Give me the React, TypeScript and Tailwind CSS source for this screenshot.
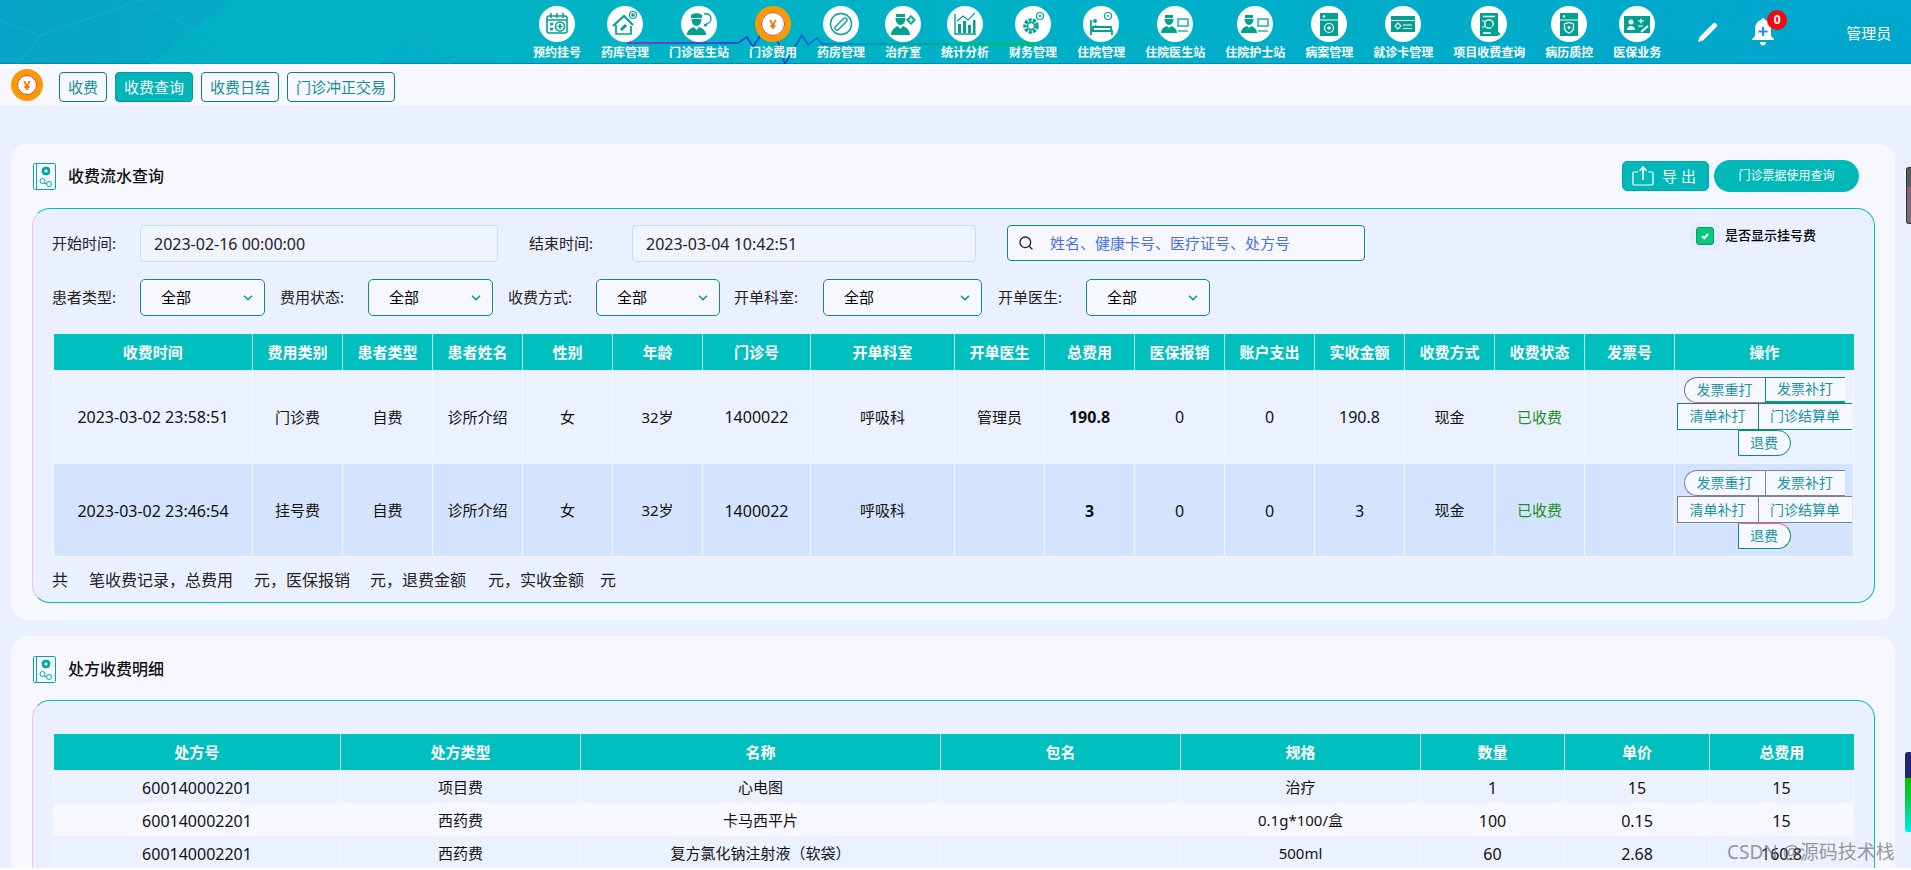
import { ChevronDown, Search } from "lucide-react";
import type { ReactNode } from "react";

const T = "#00a093";

const icons: Record<string, ReactNode> = {
  calendar: <g fill="none" stroke={T} strokeWidth="1.6"><rect x="8" y="10" width="20" height="17" rx="2" /><path d="M8 14h20M12 7v5M18 7v5M24 7v5" /><circle cx="21" cy="20.5" r="4.5" /><path d="M21 18v5M18.5 20.5h5" /><path d="M11 18h3M11 23h3" strokeWidth="2.4" /></g>,
  house: <g fill="none" stroke={T} strokeWidth="1.7"><path d="M6 20 17 10l9 9" strokeWidth="2.2" /><path d="M9 19v9h15v-8" /><path d="m14 24 5-5" strokeWidth="3" /><circle cx="26" cy="9" r="3.5" strokeWidth="1.2" /><circle cx="26" cy="9" r="1" fill={T} /></g>,
  doctor: <g fill={T}><path d="M10 9c3-2.5 8-2.5 11 0v3H10z" /><path d="M10.5 13h10c0 4-2 7-5 7s-5-3-5-7z" /><path d="M6 29c0-5 4-7 7-8l2.5 3 2.5-3c3 1 7 3 7 8z" /><path d="M23 8c4-1 7 1 7 5 0 3-3 5-5 5" fill="none" stroke={T} strokeWidth="1.3" /><circle cx="24.5" cy="19" r="1.6" /></g>,
  pill: <g fill="none" stroke={T}><circle cx="18" cy="18" r="10.5" strokeWidth="1.4" /><path d="m14 22 8-8" strokeWidth="5.4" strokeLinecap="round" /><path d="m14 22 8-8" stroke="#fff" strokeWidth="2.8" strokeLinecap="round" /></g>,
  nurse: <g fill={T}><path d="M11 8h9v3h-9z" /><path d="M10.5 12h10c0 4-2 7-5 7s-5-3-5-7z" /><path d="M6 29c0-5 4-8 7-9l2.5 3 2.5-3c3 1 7 4 7 9z" /><path d="m26 9 5 5-5 5-5-5z" /><path d="M26 11.5v5M23.5 14h5" stroke="#fff" strokeWidth="1.2" /></g>,
  chart: <g fill={T}><path d="M8 8v20h21" fill="none" stroke={T} strokeWidth="1.4" /><rect x="11" y="18" width="3" height="9" /><rect x="16" y="15" width="3" height="12" /><rect x="21" y="19" width="3" height="8" /><rect x="26" y="14" width="2.5" height="13" /><path d="m10 15 6-5 5 4 7-7" fill="none" stroke={T} strokeWidth="1.3" /></g>,
  gear: <g fill="none" stroke={T}><circle cx="16" cy="20" r="6" strokeWidth="3.5" strokeDasharray="3 1.2" /><circle cx="16" cy="20" r="3.5" strokeWidth="1.5" /><circle cx="25" cy="10" r="3.5" strokeWidth="1.2" /><circle cx="25" cy="10" r="1" fill={T} /></g>,
  bed: <g fill={T}><path d="M8 14v15M8 25h21v4M10 21h18v4H10z" fill="none" stroke={T} strokeWidth="1.8" /><circle cx="12" cy="15" r="2" /><path d="m12 19 6 2h-6z" /><circle cx="25" cy="10" r="3.5" fill="none" stroke={T} strokeWidth="1.2" /><circle cx="25" cy="10" r="1" /></g>,
  docScreen: <g fill={T}><path d="M8 9h8v3H8z" /><path d="M7.5 13h9c0 3-2 6-4.5 6s-4.5-3-4.5-6z" /><path d="M4 27c0-4 3-6 6-7l2 2 2-2c3 1 6 3 6 7z" /><rect x="21" y="13" width="10" height="7" fill="none" stroke={T} strokeWidth="1.3" /><path d="M21 25h10" stroke={T} strokeWidth="1.2" /></g>,
  record: <g><rect x="9" y="7" width="18" height="23" fill={T} /><path d="M9 14h18" stroke="#fff" strokeWidth="1" /><circle cx="13" cy="10.5" r="1.2" fill="#fff" /><circle cx="18" cy="22" r="4.5" fill="none" stroke="#fff" strokeWidth="1.2" /><circle cx="18" cy="22" r="1.8" fill="#fff" /></g>,
  card: <g><rect x="6" y="10" width="24" height="16" fill={T} /><path d="M6 14.5h24M18 19h9M18 22.5h9" stroke="#fff" strokeWidth="1.2" /><path d="m13 17 3 3-3 3-3-3z" fill="none" stroke="#fff" strokeWidth="1.1" /></g>,
  search: <g><rect x="9" y="7" width="18" height="23" fill={T} /><path d="M12 10.5h12M12 27h8" stroke="#fff" strokeWidth="1.4" /><circle cx="18" cy="18" r="4.2" fill={T} stroke="#fff" strokeWidth="1.3" /><path d="m21 21 8 8" stroke={T} strokeWidth="2.2" /><path d="M11 15h3M11 21h3" stroke="#fff" strokeWidth="1.1" /></g>,
  shield: <g><rect x="9" y="7" width="18" height="23" fill={T} /><path d="M9 14h18" stroke="#fff" strokeWidth="1" /><circle cx="13" cy="10.5" r="1.2" fill="#fff" /><path d="M18 16.5l4.5 1.5v4c0 2.5-2 4-4.5 5-2.5-1-4.5-2.5-4.5-5v-4z" fill="none" stroke="#fff" strokeWidth="1.2" /><circle cx="18" cy="21.5" r="1.5" fill="#fff" /></g>,
  ins: <g><rect x="5" y="10" width="26" height="17" fill={T} /><circle cx="12" cy="16" r="2.5" fill="#fff" /><path d="M8 24c0-3 2-4 4-4s4 1 4 4z" fill="#fff" /><path d="M19 15h6M22 12.5v5M19 20h5" stroke="#fff" strokeWidth="1.1" /><path d="m22 26 7-6" stroke="#fff" strokeWidth="1.8" /></g>,
};

const navItems: [string, string][] = [
  ["预约挂号", "calendar"], ["药库管理", "house"], ["门诊医生站", "doctor"], ["门诊费用", "yuan"],
  ["药房管理", "pill"], ["治疗室", "nurse"], ["统计分析", "chart"], ["财务管理", "gear"],
  ["住院管理", "bed"], ["住院医生站", "docScreen"], ["住院护士站", "docScreen"], ["病案管理", "record"],
  ["就诊卡管理", "card"], ["项目收费查询", "search"], ["病历质控", "shield"], ["医保业务", "ins"],
];

function YuanBadge({ className }: { className: string }) {
  return <div className={"flex shrink-0 items-center justify-center rounded-full border-[6px] border-[#f99a05] bg-white " + className}>
    <div className="flex h-full w-full items-center justify-center rounded-full border border-[#e8331b] text-[13px] font-bold leading-none text-[#f07a00]">¥</div>
  </div>;
}

function NavItem({ label, icon }: { label: string; icon: string }) {
  return <div className="flex flex-col items-center">
    {icon === "yuan"
      ? <YuanBadge className="h-9 w-9" />
      : <div className="h-9 w-9 rounded-full bg-white"><svg viewBox="0 0 36 36" className="h-9 w-9">{icons[icon]}</svg></div>}
    <span className="mt-[5px] whitespace-nowrap text-[12px] font-bold leading-[12px] text-white">{label}</span>
  </div>;
}

function HeaderDecor() {
  return <svg className="pointer-events-none absolute inset-0 h-[64px] w-[1911px]" viewBox="0 0 1911 64">
    <defs>
      <linearGradient id="ecg" gradientUnits="userSpaceOnUse" x1="627" y1="0" x2="1035" y2="0">
        <stop offset="0" stopColor="#8a22c8" />
        <stop offset="0.35" stopColor="#1c36d6" />
        <stop offset="0.55" stopColor="#0a80c8" />
        <stop offset="1" stopColor="#00d400" />
      </linearGradient>
    </defs>
    <path d="M0 20 40 36 18 64M40 36 140 0M140 0l90 48-80 16M230 48 330 0M330 0l120 64" fill="none" stroke="#1fb4cf" strokeWidth="1" opacity="0.6" />
    <path d="M230 0h210l-60 64H150z" fill="#00b7c4" opacity="0.55" />
    <path d="M1600 0h311v64h-311z" fill="#00a4cc" opacity="0.4" />
    <path d="M627 43H738L747 37L753 47L760 36L778 42L785 64L802 35L808 45L817 38L822 44H1035" fill="none" stroke="url(#ecg)" strokeWidth="1.5" />
  </svg>;
}

function Header() {
  return <header className="relative flex h-[66px] items-start border-b-2 border-white bg-[linear-gradient(90deg,#08a3c6_0%,#04aec8_18%,#00b4c4_32%,#00afc8_60%,#00a8cc_100%)] shadow-[inset_0_-1px_0_#0686b4]">
    <HeaderDecor />
    <nav className="relative ml-[533px] mt-[6px] flex gap-5">
      {navItems.map(([label, icon]) => <NavItem key={label} label={label} icon={icon} />)}
    </nav>
    <svg viewBox="0 0 22 22" className="relative ml-[36px] mt-[21px] h-[22px] w-[22px]">
      <path d="M1 21l1.5-5L16 2.500a2 2 0 0 1 3 0l.5.5a2 2 0 0 1 0 3L6 19.5z" fill="#fff" />
    </svg>
    <div className="relative ml-[31px] mt-[17px] h-[30px] w-[26px]">
      <svg viewBox="0 0 26 30" className="h-[30px] w-[26px]">
        <path d="M13 1c1.5 0 2 1 2 2 4 1 6 5 6 9v7l3 3v1H2v-1l3-3v-7c0-4 2-8 6-9 0-1 .5-2 2-2z" fill="#fff" />
        <path d="M10 25h6c0 2-1 3.5-3 3.5S10 27 10 25z" fill="#fff" />
        <path d="M13 10v9M8.5 14.5h9" stroke="#1e8fe8" strokeWidth="2" />
      </svg>
      <span className="absolute left-[17px] top-[-7px] flex h-5 w-5 items-center justify-center rounded-full bg-[#ef0b10] text-[12px] font-bold leading-none text-white">0</span>
    </div>
    <span className="relative ml-[70px] mt-[23px] whitespace-nowrap text-[15px] leading-5 text-white">管理员</span>
  </header>;
}

const subTabs = ["收费", "收费查询", "收费日结", "门诊冲正交易"];

function SubNav() {
  return <div className="flex h-[39px] items-start bg-[#f7f8ff] pl-[11px]">
    <YuanBadge className="mt-[3px] h-8 w-8 border-[5px]" />
    <div className="ml-4 mt-[6px] flex gap-2">
      {subTabs.map((t) => <button key={t} className={t === "收费查询"
        ? "h-[30px] rounded-[4px] border border-[#0d948c] bg-[#00b6b8] px-[8px] text-[15px] text-white"
        : "h-[30px] rounded-[4px] border border-[#0b7f78] bg-[#f7f8ff] px-[8px] text-[15px] text-[#148f96]"}>{t}</button>)}
    </div>
  </div>;
}

function BookIcon() {
  return <svg viewBox="0 0 23 27" className="h-[27px] w-[23px] shrink-0" fill="none" stroke="#00a6a6">
    <rect x="0.5" y="0.5" width="22" height="26" rx="1" />
    <path d="M3.5 1v25" />
    <circle cx="13" cy="8" r="4" fill="#00a6a6" />
    <path d="M13 6v4M11 8h4" stroke="#fff" />
    <circle cx="9.5" cy="18" r="2.5" />
    <circle cx="16" cy="21" r="2.5" />
    <path d="M11 20l3 1" />
  </svg>;
}

function SectionTitle({ children }: { children: ReactNode }) {
  return <div className="flex items-center gap-3">
    <BookIcon />
    <h2 className="text-[16px] font-medium leading-6 text-[#111]">{children}</h2>
  </div>;
}

function Picker({ label, labelW, value, w, ml }: { label: string; labelW: string; value: string; w: string; ml: string }) {
  return <div className={"flex items-center " + ml}>
    <span className={"text-[15px] text-[#222] -ml-px whitespace-nowrap " + labelW}>{label}</span>
    <div className={"flex h-[37px] items-center justify-between rounded-[5px] border border-[#0d8b7f] bg-[#f7f8ff] pl-[20px] pr-[9px] " + w}>
      <span className="text-[15px] text-black">{value}</span>
      <ChevronDown size={14} strokeWidth={3} className="text-[#0d9a94]" />
    </div>
  </div>;
}

function Filters() {
  return <div>
    <div className="flex items-start">
      <span className="-ml-px w-[88px] text-[15px] leading-[37px] text-[#222]">开始时间:</span>
      <input readOnly value="2023-02-16 00:00:00" className="h-[37px] w-[358px] rounded-[4px] border border-[#c2def8] bg-[#f0f4fe] pl-[13px] text-[16px] text-[#222] outline-none" />
      <span className="ml-[31px] w-[103px] text-[15px] leading-[37px] text-[#222]">结束时间:</span>
      <input readOnly value="2023-03-04 10:42:51" className="h-[37px] w-[344px] rounded-[4px] border border-[#c2def8] bg-[#f0f4fe] pl-[13px] text-[16px] text-[#222] outline-none" />
      <div className="ml-[31px] flex h-[36px] w-[358px] items-center rounded-[4px] border border-[#0d8b7f] bg-[#f7f8ff] pl-[10px]">
        <Search size={16} className="shrink-0 text-[#222]" />
        <input placeholder="姓名、健康卡号、医疗证号、处方号" className="ml-[16px] w-full bg-transparent text-[15px] outline-none placeholder:text-[#4a72e0]" />
      </div>
      <div className="ml-[325px] mt-[-3px] flex h-[28px] w-[30px] shrink-0 items-center justify-center rounded-[8px] bg-[#e3ebfb]">
        <span className="flex h-[18px] w-[18px] items-center justify-center rounded-[3px] border border-[#0a9a6a] bg-[#06c77e]">
          <svg viewBox="0 0 12 12" className="h-3 w-3" fill="none" stroke="#fff" strokeWidth="2"><path d="m3 6 2.2 2.2L9 4" /></svg>
        </span>
      </div>
      <span className="ml-[5px] mt-[-1px] whitespace-nowrap text-[13px] font-medium leading-[22px] text-black">是否显示挂号费</span>
    </div>
    <div className="mt-[17px] flex items-center">
      <Picker label="患者类型:" labelW="w-[88px]" value="全部" w="w-[125px]" ml="" />
      <Picker label="费用状态:" labelW="w-[88px]" value="全部" w="w-[125px]" ml="ml-[16px]" />
      <Picker label="收费方式:" labelW="w-[88px]" value="全部" w="w-[124px]" ml="ml-[16px]" />
      <Picker label="开单科室:" labelW="w-[89px]" value="全部" w="w-[159px]" ml="ml-[15px]" />
      <Picker label="开单医生:" labelW="w-[88px]" value="全部" w="w-[124px]" ml="ml-[17px]" />
    </div>
  </div>;
}

const feeCols: [string, string][] = [
  ["收费时间", "w-[199px]"], ["费用类别", "w-[90px]"], ["患者类型", "w-[90px]"], ["患者姓名", "w-[90px]"], ["性别", "w-[90px]"],
  ["年龄", "w-[90px]"], ["门诊号", "w-[108px]"], ["开单科室", "w-[144px]"], ["开单医生", "w-[90px]"], ["总费用", "w-[90px]"],
  ["医保报销", "w-[90px]"], ["账户支出", "w-[90px]"], ["实收金额", "w-[90px]"], ["收费方式", "w-[90px]"], ["收费状态", "w-[90px]"],
  ["发票号", "w-[90px]"], ["操作", "w-[179px]"],
];

const feeRows = [
  { time: "2023-03-02 23:58:51", type: "门诊费", doctor: "管理员", total: "190.8", paid: "190.8", bg: "bg-[#ebf1fe]", first: "border-[#667085] border-b-[#e85f9c]", second: "border-[#0b8a78] border-b-[#079a86] border-b-2", third: "border-[#0b8a78]", last: "border-[#0b8a78] border-t-[#0b8a78]" },
  { time: "2023-03-02 23:46:54", type: "挂号费", doctor: "", total: "3", paid: "3", bg: "bg-[#d4e4fe]", first: "border-[#7c8598]", second: "border-[#7c8598]", third: "border-[#7c8598]", last: "border-[#0b8a78] border-t-[#e85f9c]" },
];

function Actions({ row }: { row: (typeof feeRows)[number] }) {
  const base = "h-[26px] border-y border-l bg-[#f7f8ff] text-[14px] leading-none text-[#1b93a0]";
  return <div className="flex flex-col items-center">
    <div className="flex">
      <button className={base + " w-[81px] rounded-l-full " + row.first}>发票重打</button>
      <button className={base + " w-[80px] " + row.second}>发票补打</button>
    </div>
    <div className="flex">
      <button className={base + " h-[27px] w-[81px] " + row.third}>清单补打</button>
      <button className={base + " h-[27px] w-[94px] " + row.third}>门诊结算单</button>
    </div>
    <button className={"h-[26px] w-[53px] rounded-r-full border bg-[#f7f8ff] text-[14px] leading-none text-[#1b93a0] " + row.last}>退费</button>
  </div>;
}

const cell = "border-x border-[#f4f7ff] p-0 pt-[2px]";
const numCell = "border-x border-[#f4f7ff] p-0 pt-[2px] text-[16px]";

function FeeTable() {
  return <table className="mt-[18px] w-[1800px] table-fixed border-collapse text-center text-[15px] text-[#111]">
    <colgroup>{feeCols.map(([n, w]) => <col key={n} className={w} />)}</colgroup>
    <thead>
      <tr className="h-[36px] bg-[#00bfbf] text-white">
        {feeCols.map(([n]) => <th key={n} className="border-x border-[#b9eeee] p-0 text-[15px] font-bold first:border-l-0 last:border-r-0">{n}</th>)}
      </tr>
    </thead>
    <tbody>
      {feeRows.map((r) => <tr key={r.time} className={"h-[93px] border-b border-[#f4f7ff] " + r.bg}>
        <td className={numCell}>{r.time}</td>
        {[r.type, "自费", "诊所介绍", "女", "32岁"].map((v, i) => <td key={i} className={cell}>{v}</td>)}
        <td className={numCell}>1400022</td>
        <td className={cell}>呼吸科</td>
        <td className={cell}>{r.doctor}</td>
        <td className={numCell + " font-bold"}>{r.total}</td>
        <td className={numCell}>0</td>
        <td className={numCell}>0</td>
        <td className={numCell}>{r.paid}</td>
        <td className={cell}>现金</td>
        <td className={cell + " text-[#1b8f1b]"}>已收费</td>
        <td className={cell} />
        <td className="border-x border-[#f4f7ff] p-0"><Actions row={r} /></td>
      </tr>)}
    </tbody>
  </table>;
}

function Gap({ w }: { w: string }) {
  return <span className={"inline-block " + w} />;
}

const rxCols: [string, string][] = [
  ["处方号", "w-[287px]"], ["处方类型", "w-[240px]"], ["名称", "w-[360px]"], ["包名", "w-[240px]"],
  ["规格", "w-[240px]"], ["数量", "w-[144px]"], ["单价", "w-[145px]"], ["总费用", "w-[144px]"],
];

const rxRows = [
  ["600140002201", "项目费", "心电图", "", "治疗", "1", "15", "15"],
  ["600140002201", "西药费", "卡马西平片", "", "0.1g*100/盒", "100", "0.15", "15"],
  ["600140002201", "西药费", "复方氯化钠注射液（软袋）", "", "500ml", "60", "2.68", "160.8"],
];

function RxTable() {
  return <table className="mt-[33px] w-[1800px] table-fixed border-collapse text-center text-[15px] text-[#111]">
    <colgroup>{rxCols.map(([n, w]) => <col key={n} className={w} />)}</colgroup>
    <thead>
      <tr className="h-[36px] bg-[#00bfbf] text-white">
        {rxCols.map(([n]) => <th key={n} className="border-x border-[#d6f5f5] p-0 text-[15px] font-bold first:border-l-0 last:border-r-0">{n}</th>)}
      </tr>
    </thead>
    <tbody>
      {rxRows.map((r, i) => <tr key={i} className={i % 2 === 1 ? "h-[33px] bg-[#f7f8ff]" : "h-[33px] bg-[#ebf1fe]"}>
        {r.map((v, j) => <td key={j} className={j === 0 || j >= 5 ? numCell : cell}>{v}</td>)}
      </tr>)}
    </tbody>
  </table>;
}

const panel = "ml-[21px] mr-[20px] rounded-[18px] border border-[#00bfd0] border-l-[#eccbd8] bg-[#ebf0fe] pl-[20px]";

export default function App() {
  return <div className="relative h-[870px] w-[1911px] overflow-hidden bg-white font-['Noto_Sans','Noto_Sans_CJK_SC',sans-serif]">
    <div className="h-[868px] overflow-hidden bg-[#eaf0fd]">
      <Header />
      <SubNav />
      <main className="ml-[11px] mr-[16px] mt-[39px]">
        <section className="h-[476px] rounded-[16px] bg-[#f7f8ff] pt-[16px]">
          <div className="flex h-[32px] items-center justify-between pl-[22px] pr-[36px]">
            <SectionTitle>收费流水查询</SectionTitle>
            <div className="flex items-center gap-[5px]">
              <button className="flex h-[30px] w-[87px] items-center rounded-[5px] border border-[#00a8a8] bg-[#00b8b8] pl-[9px] text-[15px] tracking-[4px] text-white">
                <svg viewBox="0 0 22 20" className="mr-[8px] h-5 w-[22px]" fill="none" stroke="#fff" strokeWidth="1.2">
                  <path d="M6 6H2a1 1 0 0 0-1 1v11a1 1 0 0 0 1 1h18a1 1 0 0 0 1-1V7a1 1 0 0 0-1-1h-4" />
                  <path d="M11 14V1M7.5 5 11 1l3.5 4" strokeWidth="1.6" />
                </svg>
                导出
              </button>
              <button className="h-[32px] w-[145px] rounded-full bg-[#00b8b8] text-[12px] text-white">门诊票据使用查询</button>
            </div>
          </div>
          <div className={panel + " mt-[16px] h-[395px] pt-[16px]"}>
            <Filters />
            <FeeTable />
            <p className="-ml-px flex h-[46px] items-center whitespace-pre text-[16px] text-[#222]">
              共<Gap w="w-[21px]" />笔收费记录，总费用<Gap w="w-[21px]" />元，医保报销<Gap w="w-[20px]" />元，退费金额<Gap w="w-[22px]" />元，实收金额<Gap w="w-[16px]" />元
            </p>
          </div>
        </section>
        <section className="mt-[16px] h-[300px] rounded-t-[16px] bg-[#f7f8ff] pt-[17px]">
          <div className="flex h-[32px] items-center pl-[22px]">
            <SectionTitle>处方收费明细</SectionTitle>
          </div>
          <div className={panel + " mt-[15px] h-[240px]"}>
            <RxTable />
          </div>
        </section>
      </main>
    </div>
    <div className="absolute right-0 top-[167px] h-[57px] w-[5px] rounded-l-[3px] border border-r-0 border-[#333] bg-[linear-gradient(180deg,#5a5a5e_0%,#5a5a5e_35%,#8c5f78_35%,#7f6a72_100%)]" />
    <div className="absolute right-0 top-[752px] h-[80px] w-[6px] rounded-l-[3px] bg-[linear-gradient(180deg,#24246e_0%,#24246e_32%,#00c800_33%,#00d040_60%,#00e6ff_100%)]" />
    <span className="absolute left-[1727px] top-[838px] whitespace-nowrap text-[19px] leading-7 text-[#777]/75">CSDN @源码技术栈</span>
  </div>;
}
